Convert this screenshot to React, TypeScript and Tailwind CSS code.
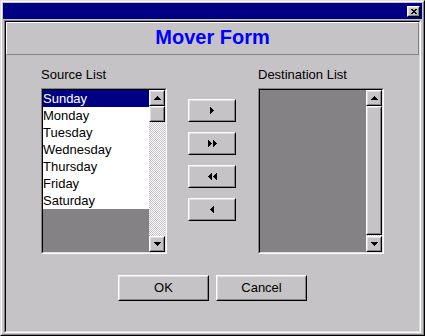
import React from "react";

const days = ["Sunday", "Monday", "Tuesday", "Wednesday", "Thursday", "Friday", "Saturday"];

function Raised({ className = "", children }: { className?: string; children?: React.ReactNode }) {
  return (
    <div className={`border border-t-white border-l-white border-r-black border-b-black ${className}`}>
      <div className="w-full h-full border border-t-[#dedfde] border-l-[#dedfde] border-r-[#848284] border-b-[#848284] bg-[#c6c3c6] flex items-center justify-center">
        {children}
      </div>
    </div>
  );
}

function Sunken({ className = "", children }: { className?: string; children?: React.ReactNode }) {
  return (
    <div className={`border border-t-[#848284] border-l-[#848284] border-r-white border-b-white ${className}`}>
      <div className="w-full h-full border border-t-black border-l-black border-r-[#dedfde] border-b-[#dedfde] flex">
        {children}
      </div>
    </div>
  );
}

function Tri({ dir }: { dir: "up" | "down" | "left" | "right" }) {
  if (dir === "up") {
    return (
      <svg width="7" height="4" shapeRendering="crispEdges">
        <rect x="3" y="0" width="1" height="1" />
        <rect x="2" y="1" width="3" height="1" />
        <rect x="1" y="2" width="5" height="1" />
        <rect x="0" y="3" width="7" height="1" />
      </svg>
    );
  }
  if (dir === "down") {
    return (
      <svg width="7" height="4" shapeRendering="crispEdges">
        <rect x="0" y="0" width="7" height="1" />
        <rect x="1" y="1" width="5" height="1" />
        <rect x="2" y="2" width="3" height="1" />
        <rect x="3" y="3" width="1" height="1" />
      </svg>
    );
  }
  if (dir === "right") {
    return (
      <svg width="4" height="7" shapeRendering="crispEdges">
        <rect x="0" y="0" width="1" height="7" />
        <rect x="1" y="1" width="1" height="5" />
        <rect x="2" y="2" width="1" height="3" />
        <rect x="3" y="3" width="1" height="1" />
      </svg>
    );
  }
  return (
    <svg width="4" height="7" shapeRendering="crispEdges">
      <rect x="3" y="0" width="1" height="7" />
      <rect x="2" y="1" width="1" height="5" />
      <rect x="1" y="2" width="1" height="3" />
      <rect x="0" y="3" width="1" height="1" />
    </svg>
  );
}

function CloseGlyph() {
  return (
    <svg width="6" height="5" shapeRendering="crispEdges">
      <rect x="0" y="0" width="2" height="1" />
      <rect x="4" y="0" width="2" height="1" />
      <rect x="1" y="1" width="4" height="1" />
      <rect x="2" y="2" width="2" height="1" />
      <rect x="1" y="3" width="4" height="1" />
      <rect x="0" y="4" width="2" height="1" />
      <rect x="4" y="4" width="2" height="1" />
    </svg>
  );
}

const checker =
  "bg-[image:repeating-conic-gradient(#c6c3c6_0_25%,#ffffff_0_50%)] bg-[length:2px_2px]";

export default function App() {
  return (
    <div className="w-[425px] h-[336px] border border-t-[#dedfde] border-l-[#dedfde] border-r-black border-b-black font-['Liberation_Sans',Arial,sans-serif] text-black">
      <div className="h-full border border-t-white border-l-white border-r-[#848284] border-b-[#848284] bg-[#c6c3c6] p-[1px] flex flex-col">
        {/* title bar */}
        <div className="h-[16px] bg-[#000084] flex justify-end items-start pt-[3px] pr-[2px]">
          <Raised className="w-[13px] h-[11px]">
            <CloseGlyph />
          </Raised>
        </div>

        {/* client area */}
        <Sunken className="mt-[1px] mx-[1px] flex-1">
          <div className="flex-1 flex flex-col">
            <div className="h-[33px] border border-t-white border-l-white border-r-[#848284] border-b-[#848284] pt-[4px] text-center">
              <h1 className="text-[20px] leading-[20px] font-bold text-[#0000ff]">Mover Form</h1>
            </div>

            <div className="flex pt-[12px] pl-[35px]">
              {/* source */}
              <div className="w-[126px]">
                <p className="text-[13px] leading-[15px] h-[15px] mb-[6px]">Source List</p>
                <Sunken className="h-[166px]">
                  <div className="flex-1 bg-[#848284] flex flex-col">
                    {days.map((d, i) => (
                      <div
                        key={d}
                        className={
                          i === 0
                            ? "h-[17px] leading-[17px] text-[13px] bg-[#000084] text-white"
                            : "h-[17px] leading-[17px] text-[13px] bg-white"
                        }
                      >
                        {d}
                      </div>
                    ))}
                  </div>
                  <div className="w-[16px] flex flex-col">
                    <Raised className="h-[16px]">
                      <Tri dir="up" />
                    </Raised>
                    <Raised className="h-[16px]" />
                    <div className={`flex-1 ${checker}`} />
                    <Raised className="h-[16px]">
                      <Tri dir="down" />
                    </Raised>
                  </div>
                </Sunken>
              </div>

              {/* mover buttons */}
              <div className="w-[48px] ml-[21px] pt-[32px] flex flex-col gap-[10px]">
                <Raised className="h-[23px]">
                  <Tri dir="right" />
                </Raised>
                <Raised className="h-[23px]">
                  <div className="flex gap-[1px]">
                    <Tri dir="right" />
                    <Tri dir="right" />
                  </div>
                </Raised>
                <Raised className="h-[23px]">
                  <div className="flex gap-[1px]">
                    <Tri dir="left" />
                    <Tri dir="left" />
                  </div>
                </Raised>
                <Raised className="h-[23px]">
                  <Tri dir="left" />
                </Raised>
              </div>

              {/* destination */}
              <div className="w-[126px] ml-[22px]">
                <p className="text-[13px] leading-[15px] h-[15px] mb-[6px]">Destination List</p>
                <Sunken className="h-[166px]">
                  <div className="flex-1 bg-[#848284]" />
                  <div className="w-[16px] flex flex-col">
                    <Raised className="h-[16px]">
                      <Tri dir="up" />
                    </Raised>
                    <Raised className="flex-1" />
                    <div className={`h-[1px] ${checker}`} />
                    <Raised className="h-[16px]">
                      <Tri dir="down" />
                    </Raised>
                  </div>
                </Sunken>
              </div>
            </div>

            <div className="mt-[21px] flex justify-center gap-[7px]">
              <Raised className="w-[91px] h-[26px]">
                <span className="text-[13px]">OK</span>
              </Raised>
              <Raised className="w-[91px] h-[26px]">
                <span className="text-[13px]">Cancel</span>
              </Raised>
            </div>
          </div>
        </Sunken>
      </div>
    </div>
  );
}
